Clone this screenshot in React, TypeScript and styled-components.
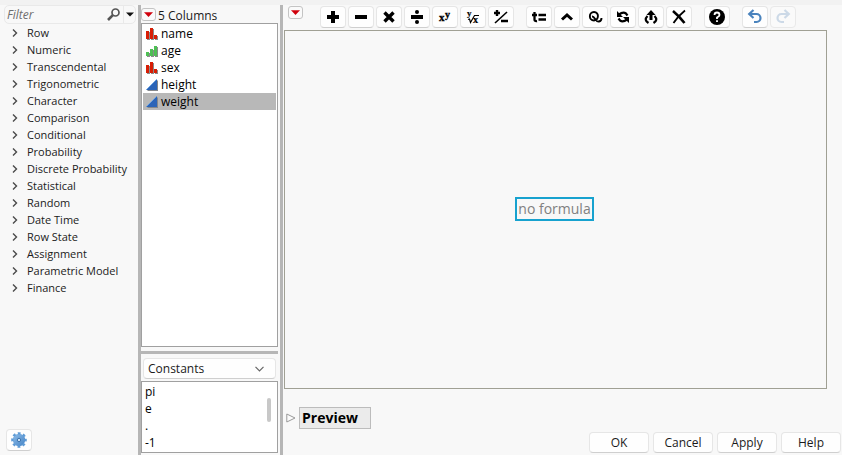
import React, { useState } from "react";
import styled, { createGlobalStyle, css } from "styled-components";

const GlobalStyle = createGlobalStyle`
  *, *::before, *::after { box-sizing: border-box; }
  body { margin: 0; background: #f8f8f8; }
  body, button, input, select {
    font-family: "Open Sans", "Noto Sans", sans-serif;
    font-size: 12px;
    color: #1b1b1b;
  }
  button { cursor: default; }
  ul { list-style: none; margin: 0; padding: 0; }
  svg { display: block; flex: none; overflow: visible; }
`;

const Page = styled.div`
  display: flex;
  flex-direction: column;
  height: 100vh;
`;

const TopStrip = styled.div`
  flex: none;
  height: 5px;
  background: #f2f2f2;
`;

const Columns = styled.main`
  flex: 1;
  min-height: 0;
  display: grid;
  grid-template-columns: 138px 3px 137px 2px 3px minmax(0, 1fr);
`;

const Splitter = styled.div<{ $horizontal?: boolean }>`
  background: #b6b6b6;
  ${(p) => p.$horizontal && css`flex: none; height: 3px; margin: 4px 0;`}
`;

const raised = css`
  border: 1px solid #e6e6e6;
  border-bottom-color: #cfcfcf;
  border-radius: 4px;
  background: #fefefe;
`;

const FunctionPanel = styled.section`
  display: flex;
  flex-direction: column;
  padding: 0 2px 4px 4px;
`;

const FilterBar = styled.div`
  display: flex;
  align-items: center;
  height: 19px;
  border: 1px solid #e9e9e9;
  border-radius: 5px;
`;

const FilterInput = styled.input`
  flex: 1;
  min-width: 0;
  height: 17px;
  padding: 0 2px;
  border: 0;
  outline: 0;
  background: transparent;
  font-style: italic;
  &::placeholder { color: #6e6e6e; opacity: 1; }
`;

const FilterButton = styled.button<{ $divided?: boolean }>`
  display: flex;
  align-items: center;
  justify-content: center;
  width: ${(p) => (p.$divided ? 12 : 19)}px;
  height: 17px;
  padding: 0;
  border: 0;
  border-left: ${(p) => (p.$divided ? "1px solid #e9e9e9" : "0")};
  background: none;
`;

const CategoryList = styled.ul`
  flex: 1;
`;

const CategoryButton = styled.button`
  display: flex;
  align-items: center;
  gap: 9px;
  width: 100%;
  height: 17px;
  padding: 0 0 0 8px;
  border: 0;
  background: none;
  font-size: 11px;
  line-height: 17px;
  white-space: nowrap;
`;

const SettingsButton = styled.button`
  ${raised}
  display: flex;
  align-items: center;
  justify-content: center;
  width: 26px;
  height: 22px;
  margin-left: 2px;
  padding: 0;
`;

const DataPanel = styled.section`
  display: flex;
  flex-direction: column;
  min-height: 0;
  padding-bottom: 2px;
`;

const PanelHeading = styled.div`
  display: flex;
  align-items: center;
  gap: 2px;
  height: 18px;
  line-height: 16px;
  padding-top: 3px;
`;

const HotSpot = styled.button`
  display: flex;
  align-items: center;
  justify-content: center;
  flex: none;
  width: 15px;
  height: 13px;
  margin-bottom: 3px;
  padding: 0;
  border: 1px solid #c4c4c4;
  border-radius: 3px;
  background: #fafafa;
`;

const ColumnList = styled.ul`
  flex: 1;
  min-height: 0;
  padding: 1px;
  border: 1px solid #a0a0a0;
  background: #fff;
`;

const ColumnButton = styled.button<{ $selected: boolean }>`
  display: flex;
  align-items: center;
  gap: 3px;
  width: 100%;
  height: 17px;
  padding: 0 3px;
  border: 0;
  background: ${(p) => (p.$selected ? "#b8b8b8" : "transparent")};
  color: #000;
  line-height: 17px;
`;

const SelectWrap = styled.div`
  ${raised}
  flex: none;
  display: grid;
  align-items: center;
  height: 21px;
  margin: 0 2px 2px;
  & > * { grid-area: 1 / 1; }
  & > svg { justify-self: end; margin-right: 11px; pointer-events: none; }
`;

const Select = styled.select`
  appearance: none;
  width: 100%;
  height: 19px;
  padding: 0 4px;
  border: 0;
  outline: 0;
  background: transparent;
`;

const ConstantsBox = styled.div`
  flex: none;
  display: flex;
  justify-content: space-between;
  height: 72px;
  padding: 1px 6px 0 3px;
  border: 1px solid #a0a0a0;
  background: #fff;
`;

const ConstantItem = styled.li`
  height: 17px;
  line-height: 17px;
  color: #000;
`;

const ScrollThumb = styled.div`
  width: 4px;
  height: 24px;
  margin-top: 15px;
  border-radius: 2px;
  background: #c8c8c8;
`;

const EditorPanel = styled.section`
  display: flex;
  flex-direction: column;
  padding-left: 1px;
`;

const Toolbar = styled.div`
  display: flex;
  height: 25px;
  padding: 1px 0 0 4px;
`;

const ToolGroups = styled.div`
  display: flex;
  gap: 12px;
  margin-left: 17px;
`;

const ToolGroup = styled.div`
  display: flex;
  gap: 2px;
`;

const ToolButton = styled.button`
  ${raised}
  display: flex;
  align-items: center;
  justify-content: center;
  width: 26px;
  height: 22px;
  padding: 0;
  &:disabled { background: #fafafa; border-color: #e9e9e9; }
`;

const Canvas = styled.div`
  flex: 1;
  display: flex;
  align-items: center;
  justify-content: center;
  margin-right: 15px;
  padding: 0 2px 2px 0;
  border: 1px solid #a0a094;
`;

const FormulaSlot = styled.button`
  height: 24px;
  padding: 0 1px;
  border: 2px solid #17a2cf;
  background: #f8f8f8;
  color: #808080;
  font-size: 14px;
  line-height: 20px;
`;

const PreviewRow = styled.div`
  display: flex;
  align-items: center;
  gap: 3px;
  height: 22px;
  margin-top: 18px;
  padding-left: 2px;
`;

const Disclosure = styled.button`
  padding: 0;
  border: 0;
  background: none;
`;

const PreviewTitle = styled.h2`
  width: 72px;
  height: 22px;
  margin: 0;
  padding: 0 2px;
  border: 1px solid #bcbcbc;
  background: #ebebeb;
  color: #000;
  font-size: 14px;
  font-weight: 700;
  line-height: 20px;
`;

const Actions = styled.div`
  display: flex;
  justify-content: flex-end;
  gap: 4px;
  margin: 3px 1px 2px 0;
`;

const ActionButton = styled.button`
  ${raised}
  width: 60px;
  height: 21px;
  padding: 0;
  line-height: 18px;
`;

const GlyphText = styled.text`
  font-family: "Liberation Serif", serif;
  font-weight: 700;
`;

const Chevron = () => (
  <svg width="6" height="8" viewBox="0 0 6 8" fill="none" stroke="#4a4a4a" strokeWidth="1.4">
    <path d="M1 .5 4.5 4 1 7.5" />
  </svg>
);

const RedTriangle = () => (
  <svg width="9" height="5" viewBox="0 0 9 5"><path d="M0 .3h9L4.5 5z" fill="#d0000c" /></svg>
);

const NominalIcon = () => (
  <svg width="12" height="12" viewBox="0 0 12 12" shapeRendering="crispEdges">
    <path d="M1 4h3v8H1zM5 1h3v11H5zM9 8h3v4H9z" fill="#8b8b8b" />
    <path d="M0 3h3v8H0zM4 0h3v11H4zM8 7h3v4H8z" fill="#d81e05" />
  </svg>
);

const OrdinalIcon = () => (
  <svg width="12" height="12" viewBox="0 0 12 12" shapeRendering="crispEdges">
    <path d="M1 8h3v4H1zM5 5h3v7H5zM9 2h3v10H9z" fill="#8b8b8b" />
    <path d="M0 7h3v4H0zM4 4h3v7H4zM8 1h3v10H8z" fill="#4fbf55" />
  </svg>
);

const ContinuousIcon = () => (
  <svg width="12" height="12" viewBox="0 0 12 12">
    <path d="M12 1v11H1z" fill="#85888c" />
    <path d="M11 0v11H0z" fill="#2b64b8" />
    <path d="M.5 10.5 10.5.5" stroke="#6ba1df" />
  </svg>
);

const Tool = ({ children }: { children: React.ReactNode }) => (
  <svg width="16" height="16" viewBox="0 0 16 16" fill="none" stroke="#000" strokeWidth="2">
    {children}
  </svg>
);

const toolGroups: { label: string; disabled?: boolean; icon: React.ReactNode }[][] = [
  [
    { label: "Add", icon: <path d="M8 2v12M2 8h12" strokeWidth="4" /> },
    { label: "Subtract", icon: <path d="M2 8h12" strokeWidth="4" /> },
    { label: "Multiply", icon: <path d="m3.500 3.500 9 9m0-9-9 9" strokeWidth="3.400" /> },
    {
      label: "Divide",
      icon: (
        <>
          <path d="M2 8h12" strokeWidth="4" />
          <circle cx="8" cy="3" r="2" fill="#000" stroke="none" />
          <circle cx="8" cy="13" r="2" fill="#000" stroke="none" />
        </>
      ),
    },
    {
      label: "Power",
      icon: (
        <g fill="#000" stroke="#000" strokeWidth=".3">
          <GlyphText x="2" y="12" fontSize="11">x</GlyphText>
          <GlyphText x="8" y="9" fontSize="10">y</GlyphText>
        </g>
      ),
    },
    {
      label: "Root",
      icon: (
        <>
          <g fill="#000" stroke="#000" strokeWidth=".2">
            <GlyphText x="2" y="7" fontSize="9">y</GlyphText>
            <GlyphText x="8" y="14" fontSize="10">x</GlyphText>
          </g>
          <path d="m3 10.500 1.500-.5 1 3.500L9.500 6.500H14" strokeWidth="1.200" />
        </>
      ),
    },
    {
      label: "Change sign",
      icon: <><path d="M4 1v6M1 4h6M8 12h7" strokeWidth="2.400" /><path d="M2 14 14 3" strokeWidth="1.600" /></>,
    },
  ],
  [
    { label: "Local variable", icon: <path d="M3.500 3v7.500q0 2 2.500 1.500M1 6h5M7.500 6h7.500M7.500 10.500h7.500" strokeWidth="2.300" /> },
    { label: "Insert", icon: <path d="m3 10.500 5-4.500 5 4.500" strokeWidth="3" /> },
    {
      label: "Peel",
      icon: <path d="M7 11.500C1.500 11.500 1.500 3 7 3S12 11 7 11.500M5 7.500C8 7 8 13 12 12.500Q14.500 12 14.500 9" strokeWidth="1.900" />,
    },
    {
      label: "Switch terms",
      icon: (
        <>
          <path d="M4 5.500Q8 2.500 11 4.500l1.500 2M12 10.500Q8 13.500 5 11.500L3.500 9.500" strokeWidth="2.200" />
          <path d="M2 2v6h6zM14 14V8H8z" fill="#000" stroke="none" />
        </>
      ),
    },
    {
      label: "Unwrap",
      icon: (
        <>
          <path d="M8 4v7" strokeWidth="3" />
          <path d="M8 1 3.500 6h9z" fill="#000" stroke="none" />
          <path d="M4.500 7Q.5 11 5.500 14M11.500 7q4 4-1 7" strokeWidth="2.200" />
        </>
      ),
    },
    {
      label: "Delete",
      icon: <><path d="M2 2q6 5 11.500 12" strokeWidth="2.600" /><path d="M14 1.500Q7 7 2.500 14" strokeWidth="1.800" /></>,
    },
  ],
  [
    {
      label: "Help on function",
      icon: (
        <>
          <circle cx="8" cy="8" r="8" fill="#000" stroke="none" />
          <path d="M5.500 6Q5.500 3.500 8 3.500T10.500 6Q10.500 7.200 8 8.500V10M8 11.200v1.800" stroke="#fff" strokeWidth="1.800" />
        </>
      ),
    },
  ],
  [
    { label: "Undo", icon: <path d="M6.500 1 2.200 5 6.500 9M2.500 5H9.500a4 4 0 0 1 0 8H7" stroke="#4a83bd" strokeWidth="2.200" /> },
    { label: "Redo", disabled: true, icon: <path d="m9.500 1 4.300 4-4.300 4M13.500 5H6.500a4 4 0 0 0 0 8H9" stroke="#ccd9e7" strokeWidth="2.200" /> },
  ],
];

const categories = [
  "Row", "Numeric", "Transcendental", "Trigonometric", "Character", "Comparison",
  "Conditional", "Probability", "Discrete Probability", "Statistical", "Random",
  "Date Time", "Row State", "Assignment", "Parametric Model", "Finance",
];

const columns = [
  { name: "name", Icon: NominalIcon },
  { name: "age", Icon: OrdinalIcon },
  { name: "sex", Icon: NominalIcon },
  { name: "height", Icon: ContinuousIcon },
  { name: "weight", Icon: ContinuousIcon },
];

export default function App() {
  const [selected, setSelected] = useState("weight");
  return (
    <Page>
      <GlobalStyle />
      <TopStrip />
      <Columns>
        <FunctionPanel>
          <FilterBar>
            <FilterInput aria-label="Filter functions" placeholder="Filter" />
            <FilterButton aria-label="Search">
              <svg width="13" height="13" viewBox="0 0 13 13" fill="none" stroke="#555">
                <circle cx="8.500" cy="4.500" r="3.500" strokeWidth="1.700" />
                <path d="M5.800 7.200 1 12" strokeWidth="2.600" />
              </svg>
            </FilterButton>
            <FilterButton $divided aria-label="Filter options">
              <svg width="8" height="5" viewBox="0 0 8 5"><path d="M0 .5h8L4 4.500z" fill="#111" /></svg>
            </FilterButton>
          </FilterBar>
          <CategoryList>
            {categories.map((c) => (
              <li key={c}><CategoryButton><Chevron />{c}</CategoryButton></li>
            ))}
          </CategoryList>
          <SettingsButton aria-label="Settings">
            <svg width="16" height="16" viewBox="0 0 16 16">
              <defs>
                <linearGradient id="gear" x1="0" y1="0" x2="1" y2="1">
                  <stop offset="0" stopColor="#8dbce8" /><stop offset="1" stopColor="#4584c6" />
                </linearGradient>
              </defs>
              <circle cx="8" cy="8" r="6.200" fill="url(#gear)" />
              <circle cx="8" cy="8" r="6.700" fill="none" stroke="#5e9bd6" strokeWidth="2.200" strokeDasharray="2.800 2.462" strokeDashoffset="1.400" />
              <circle cx="8" cy="8" r="1.700" fill="#c9dff2" stroke="#3f74ad" />
            </svg>
          </SettingsButton>
        </FunctionPanel>
        <Splitter />
        <DataPanel>
          <PanelHeading>
            <HotSpot aria-label="Columns menu"><RedTriangle /></HotSpot>
            <span>5 Columns</span>
          </PanelHeading>
          <ColumnList>
            {columns.map(({ name, Icon }) => (
              <li key={name}>
                <ColumnButton $selected={name === selected} onClick={() => setSelected(name)}>
                  <Icon />{name}
                </ColumnButton>
              </li>
            ))}
          </ColumnList>
          <Splitter $horizontal />
          <SelectWrap>
            <Select aria-label="Element group" defaultValue="Constants">
              <option>Constants</option>
            </Select>
            <svg width="9" height="6" viewBox="0 0 9 6" fill="none" stroke="#666" strokeWidth="1.200"><path d="m.5.8 4 4 4-4" /></svg>
          </SelectWrap>
          <ConstantsBox>
            <ul>
              {["pi", "e", ".", "-1"].map((c) => <ConstantItem key={c}>{c}</ConstantItem>)}
            </ul>
            <ScrollThumb />
          </ConstantsBox>
        </DataPanel>
        <div />
        <Splitter />
        <EditorPanel>
          <Toolbar>
            <HotSpot aria-label="Formula menu"><RedTriangle /></HotSpot>
            <ToolGroups>
              {toolGroups.map((group) => (
                <ToolGroup key={group[0].label}>
                  {group.map((t) => (
                    <ToolButton key={t.label} aria-label={t.label} disabled={t.disabled}>
                      <Tool>{t.icon}</Tool>
                    </ToolButton>
                  ))}
                </ToolGroup>
              ))}
            </ToolGroups>
          </Toolbar>
          <Canvas><FormulaSlot>no formula</FormulaSlot></Canvas>
          <PreviewRow>
            <Disclosure aria-label="Expand preview">
              <svg width="10" height="10" viewBox="0 0 10 10"><path d="M.8 1v8L9 5z" fill="#fbfbfb" stroke="#999" /></svg>
            </Disclosure>
            <PreviewTitle>Preview</PreviewTitle>
          </PreviewRow>
          <Actions>
            {["OK", "Cancel", "Apply", "Help"].map((a) => <ActionButton key={a}>{a}</ActionButton>)}
          </Actions>
        </EditorPanel>
      </Columns>
    </Page>
  );
}
